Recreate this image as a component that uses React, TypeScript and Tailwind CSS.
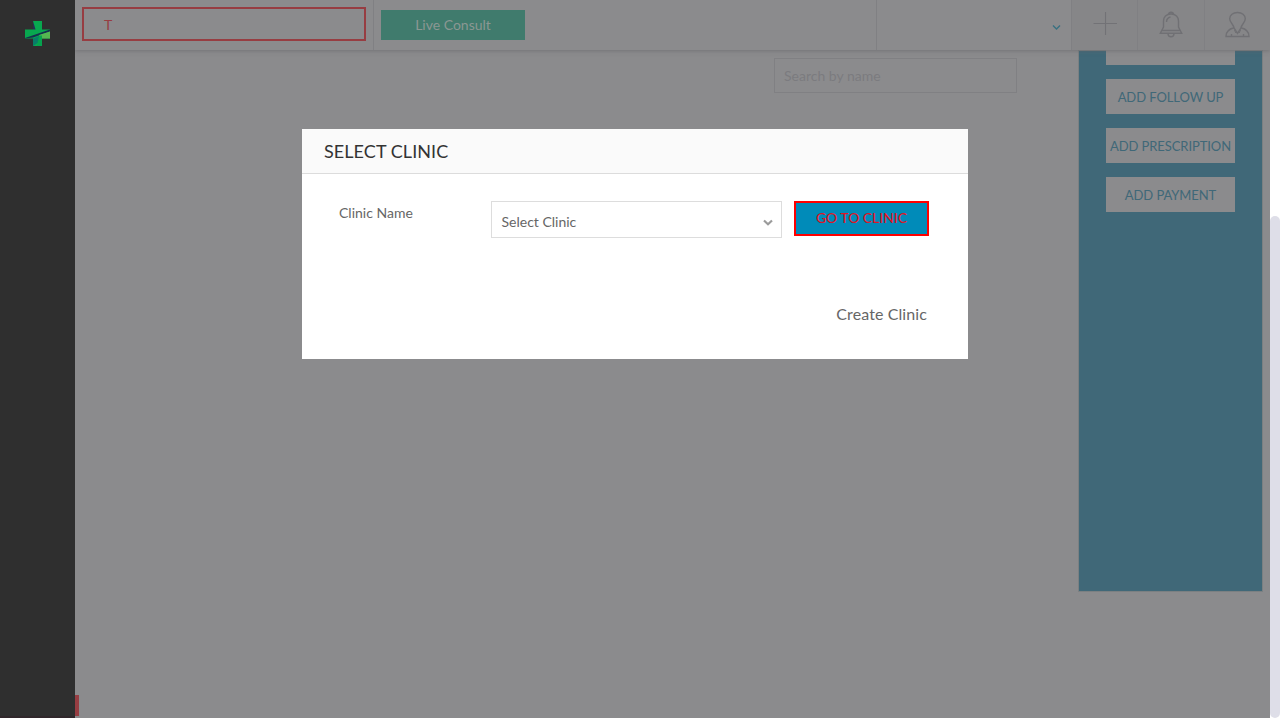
import type { ReactNode } from "react";

const ACTIONS = ["UPLOAD", "ADD FOLLOW UP", "ADD PRESCRIPTION", "ADD PAYMENT"];

function Logo() {
  return (
    <svg width="25" height="25" viewBox="0 0 25 25" className="block">
      <path d="M8 0H17V8.5H25V17.5H17V25H8V17.5H0V8.5H8Z" fill="#08a84f" />
      <path d="M8 0L10.5 8.5H8Z" fill="#252d55" />
      <path d="M0 17L25 8.5V10.5L17 13.2L8 16.5L0 17.5Z" fill="#15304f" />
      <path d="M14 14L25 10.5V17.5H16Z" fill="#55b651" />
      <path d="M8 17.5L14 15V21L8 25Z" fill="#087d68" />
      <path d="M14 14.5H17V25H12Z" fill="#05a34e" />
    </svg>
  );
}

function HeaderIcon({ children, className }: { children: ReactNode; className: string }) {
  return (
    <button className={`flex h-full shrink-0 items-start justify-center border-l border-[#808083] bg-[#868688] ${className}`}>
      {children}
    </button>
  );
}

function Header() {
  return (
    <header className="relative z-10 flex h-[50px] shrink-0 bg-[#8b8b8d] shadow-[0_1px_4px_rgba(100,100,104,0.6)]">
      <div className="w-[298px] shrink-0 pl-[7px] pt-[7px]">
        <div className="flex h-[34px] w-[284px] items-center border-2 border-[#973d42] pl-5 pt-px text-[14px] text-[#973d42]">T</div>
      </div>
      <div className="flex w-[503px] shrink-0 border-l border-[#808083] pl-[7px] pt-[10px]">
        <button className="h-[30px] w-[144px] bg-[#407b6d] pb-[2px] text-[14px] text-[#8b9793]">Live Consult</button>
      </div>
      <div className="flex w-[195px] shrink-0 justify-end border-l border-[#808083] pr-[10px] pt-[24px]">
        <svg width="9" height="7" viewBox="0 0 9 7" fill="none" stroke="#397181" strokeWidth="1.4">
          <path d="M1 1.5L4.5 5L8 1.5" />
        </svg>
      </div>
      <HeaderIcon className="w-[66px] pt-[12px]">
        <svg width="24" height="24" viewBox="0 0 24 24" stroke="#727276" strokeWidth="1.1">
          <path d="M12.5 0V23M.5 11.5H24" />
        </svg>
      </HeaderIcon>
      <HeaderIcon className="w-[67px] pt-[11px]">
        <svg width="24" height="27" viewBox="0 0 24 27" fill="none" stroke="#707074" strokeWidth="1.4">
          <path d="M9.5 3.5C9.5 .5 14.5 .5 14.5 3.5M12 3C7.2 3 4.5 6.2 4.5 10V16L1.3 22.3H22.7L19.5 16V10C19.5 6.2 16.8 3 12 3ZM3 19.5H21M9 22.5C9 26.8 15 26.8 15 22.5M7.5 11C7.5 8 9 6.5 11.5 6" />
        </svg>
      </HeaderIcon>
      <HeaderIcon className="w-[66px] pt-[11px]">
        <svg width="25" height="28" viewBox="0 0 25 28" fill="none" stroke="#707074" strokeWidth="1.4">
          <path d="M12.5 1.5C8 1.5 4.7 4 4.7 7.8C4.7 11.5 8.5 13.2 9 17L12.5 22.5L16 17C16.5 13.2 20.3 11.5 20.3 7.8C20.3 4 17 1.5 12.5 1.5ZM9 16.8C4 18 1 20 1 25.5H24C24 20 21 18 16 16.8M6.5 23V25.5M18.5 23V25.5" />
          <path d="M9.5 19L10.8 22M15.5 19L14.2 22" strokeWidth="1" />
        </svg>
      </HeaderIcon>
    </header>
  );
}

function ClinicDialog() {
  return (
    <section role="dialog" aria-label="Select clinic" className="absolute left-[302px] top-[129px] z-20 h-[230px] w-[666px] bg-white">
      <h1 className="flex h-[45px] items-center border-b border-[#dcdcdc] bg-[#fafafa] pl-[22px] text-[18px] tracking-[0.07px] text-[#333]">SELECT CLINIC</h1>
      <div className="flex h-[64px] items-start pl-[37px] pt-[27px] text-[14px] text-[#666]">
        <div className="w-[152px] shrink-0 pt-[2px] leading-[20px]">Clinic Name</div>
        <button className="flex h-[37px] w-[291px] shrink-0 items-center justify-between border border-[#ddd] pl-[9.5px] pr-2 pt-[4px] text-left">
          <span>Select Clinic</span>
          <svg width="10" height="8" viewBox="0 0 10 8" fill="none" stroke="#9b9b9b" strokeWidth="2.2">
            <path d="M1 2.5L5 6.2L9 2.5" />
          </svg>
        </button>
        <button className="ml-3 h-[35px] w-[135px] shrink-0 border-2 border-[#f00] bg-[#008bb9] pb-[3px] text-[14px] font-medium tracking-[-0.05px] text-[#df1525]">GO TO CLINIC</button>
      </div>
      <div className="flex justify-end pr-[41px] pt-[64px] text-[16px] leading-6 tracking-[0.1px] text-[#666]">Create Clinic</div>
    </section>
  );
}

export default function App() {
  return (
    <div className="relative flex h-[718px] w-[1280px] overflow-hidden bg-white font-['Lato',sans-serif]">
      <aside className="flex w-[75px] shrink-0 justify-center border-b-2 border-[#30272b] bg-[#2f2f2f] pt-[21px]">
        <Logo />
      </aside>
      <main className="flex w-[1195px] shrink-0 flex-col overflow-hidden bg-[#8b8b8d]">
        <Header />
        <div className="flex h-[541px] shrink-0 items-start">
          <div className="ml-[699px] mt-[8px] flex h-[35px] w-[243px] shrink-0 items-center border border-[#808083] pl-[9px] text-[14px] text-[#7b7b7f]">Search by name</div>
          <div className="ml-[61px] flex h-[542px] w-[185px] shrink-0 flex-col items-center border border-[#7b8082] bg-[#406878]">
            <div className="-mt-[21px] flex flex-col gap-[14px]">
              {ACTIONS.map((label) => (
                <button key={label} className="h-[35px] w-[129px] whitespace-nowrap bg-[#8b8b8d] pt-[2px] text-[13px] tracking-[-0.08px] text-[#406878] first:pb-[4px] first:pt-0">{label}</button>
              ))}
            </div>
          </div>
        </div>
        <div className="mb-[2px] mt-auto h-[21px] w-1 bg-[#973d42]" />
      </main>
      <div className="flex w-[10px] shrink-0 flex-col justify-end bg-white">
        <div className="h-[502px] rounded-full bg-[#dedee8]" />
      </div>
      <ClinicDialog />
    </div>
  );
}
